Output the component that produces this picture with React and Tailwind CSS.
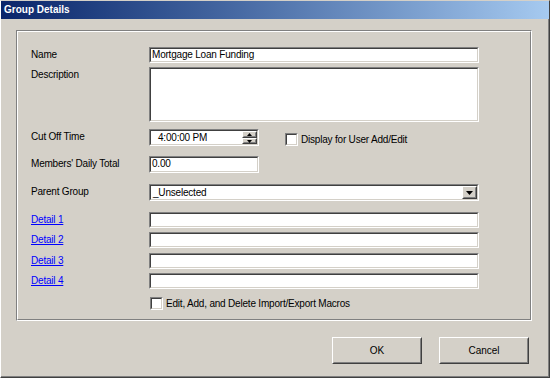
const font = { fontFamily: '"Liberation Sans", Arial, sans-serif' };

const Inset = ({ className = '', children }) => (
  <div className={`border border-t-[#808080] border-l-[#808080] border-r-white border-b-white ${className}`}>
    <div className="w-full h-full border border-t-[#404040] border-l-[#404040] border-r-[#d4d0c8] border-b-[#d4d0c8] bg-white flex items-stretch overflow-hidden">
      {children}
    </div>
  </div>
);

const Raised = ({ className = '', children }) => (
  <div className={`border border-t-white border-l-white border-r-[#404040] border-b-[#404040] bg-[#d4d0c8] ${className}`}>
    <div className="w-full h-full border border-t-[#d4d0c8] border-l-[#d4d0c8] border-r-[#808080] border-b-[#808080] flex items-center justify-center">
      {children}
    </div>
  </div>
);

const TextBox = ({ w = 'w-[330px]', h = 'h-[16px]', value = '' }) => (
  <Inset className={`${w} ${h}`}>
    <span className="pl-[1px] leading-[12px] text-[10px] tracking-[-0.2px] text-black whitespace-nowrap">{value}</span>
  </Inset>
);

const Check = () => (
  <div className="w-[13px] h-[13px] shrink-0 border border-t-[#808080] border-l-[#808080] border-r-white border-b-white">
    <div className="w-full h-full border border-t-[#404040] border-l-[#404040] border-r-[#d4d0c8] border-b-[#d4d0c8] bg-white" />
  </div>
);

const Label = ({ children, link }) => (
  <div className={`w-[118px] shrink-0 text-[10px] tracking-[-0.2px] leading-[16px] ${link ? 'text-[#0000ff] underline leading-[13px]' : 'text-black'}`}>
    {children}
  </div>
);

export default function App() {
  return (
    <div style={font} className="w-[550px] h-[378px] bg-[#d4d0c8] flex flex-col border-t border-l border-t-[#d4d0c8] border-l-white border-r border-b border-r-[#404040] border-b-[#404040] select-none">
      <div className="h-[18px] shrink-0 bg-gradient-to-r from-[#0a246a] to-[#a6caf0] flex items-center pl-[3px]">
        <span className="text-white font-bold text-[10px] leading-none">Group Details</span>
      </div>

      <div className="flex-1 flex flex-col border-r border-b border-r-[#808080] border-b-[#808080]">
        {/* group box */}
        <div className="ml-[15px] mt-[11px] w-[516px] h-[291px] border border-t-[#808080] border-l-[#808080] border-r-white border-b-white">
          <div className="w-full h-full border border-t-white border-l-white border-r-[#808080] border-b-[#808080] pl-[13px] pt-[15px] flex flex-col">
            <div className="flex items-start">
              <Label>Name</Label>
              <TextBox value="Mortgage Loan Funding" />
            </div>

            <div className="flex items-start mt-[4px]">
              <Label>Description</Label>
              <TextBox h="h-[55px]" />
            </div>

            <div className="flex items-start mt-[7px]">
              <Label>Cut Off Time</Label>
              <Inset className="w-[110px] h-[17px]">
                <span className="flex-1 pl-[7px] text-[10px] tracking-[-0.2px] leading-[13px]">4:00:00 PM</span>
                <div className="flex flex-col w-[15px]">
                  <Raised className="h-[7px] w-[15px]">
                    <svg width="5" height="3" viewBox="0 0 5 3"><path d="M2.5 0L5 3H0z" fill="#000" /></svg>
                  </Raised>
                  <Raised className="h-[6px] w-[15px]">
                    <svg width="5" height="3" viewBox="0 0 5 3"><path d="M0 0h5L2.5 3z" fill="#000" /></svg>
                  </Raised>
                </div>
              </Inset>
              <div className="flex items-center ml-[26px] mt-[4px] gap-[3px]">
                <Check />
                <span className="text-[10px] tracking-[-0.2px] leading-[13px]">Display for User Add/Edit</span>
              </div>
            </div>

            <div className="flex items-start mt-[10px]">
              <Label>Members' Daily Total</Label>
              <TextBox w="w-[110px]" h="h-[17px]" value="0.00" />
            </div>

            <div className="flex items-start mt-[11px]">
              <Label>Parent Group</Label>
              <Inset className="w-[330px] h-[17px]">
                <span className="flex-1 pl-[2px] text-[10px] tracking-[-0.2px] leading-[13px]">_Unselected</span>
                <Raised className="w-[15px] h-full">
                  <svg width="7" height="4" viewBox="0 0 7 4"><path d="M0 0h7L3.5 4z" fill="#000" /></svg>
                </Raised>
              </Inset>
            </div>

            <div className="flex items-start mt-[11px]">
              <Label link>Detail 1</Label>
              <TextBox />
            </div>
            <div className="flex items-start mt-[4px]">
              <Label link>Detail 2</Label>
              <TextBox />
            </div>
            <div className="flex items-start mt-[5px]">
              <Label link>Detail 3</Label>
              <TextBox />
            </div>
            <div className="flex items-start mt-[4px]">
              <Label link>Detail 4</Label>
              <TextBox />
            </div>

            <div className="flex items-center mt-[8px] ml-[119px] gap-[3px]">
              <Check />
              <span className="text-[10px] tracking-[-0.2px] leading-[13px]">Edit, Add, and Delete Import/Export Macros</span>
            </div>
          </div>
        </div>

        <div className="flex justify-end gap-[17px] mt-[16px] pr-[19px]">
          <Raised className="w-[90px] h-[27px]">
            <span className="text-[10px]">OK</span>
          </Raised>
          <Raised className="w-[90px] h-[27px]">
            <span className="text-[10px]">Cancel</span>
          </Raised>
        </div>
      </div>
    </div>
  );
}
